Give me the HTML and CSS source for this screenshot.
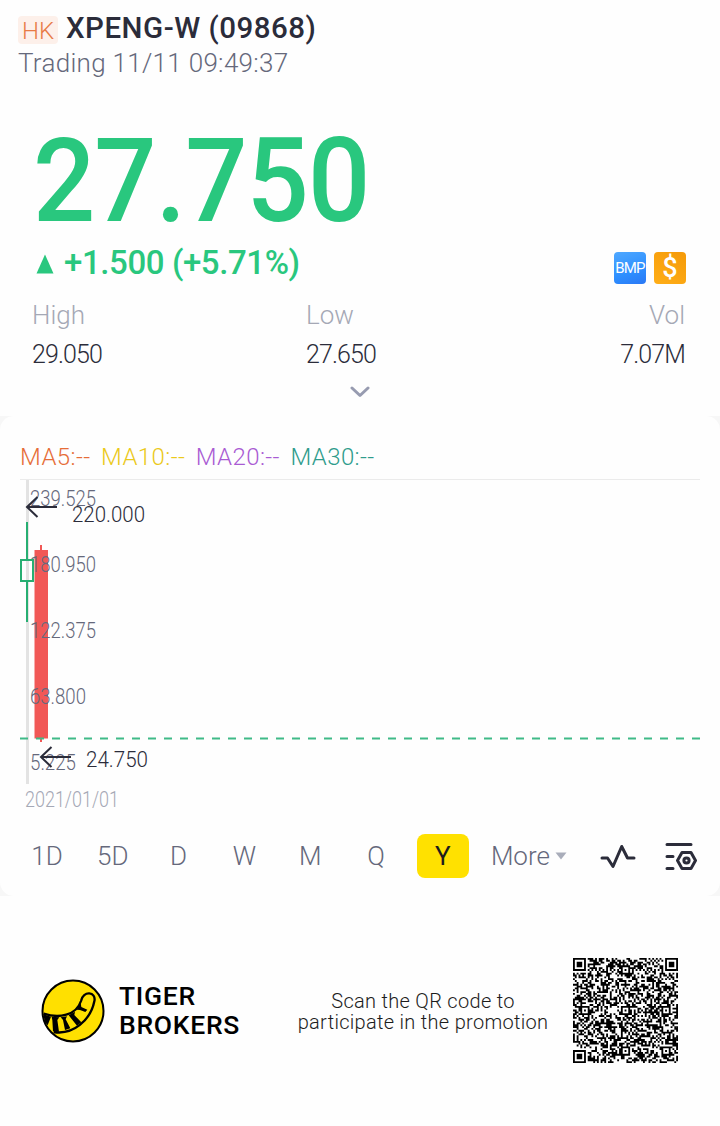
FILE: index.html
```html
<!DOCTYPE html>
<html lang="en">
<head>
    <meta charset="UTF-8">
    <meta name="viewport" content="width=device-width, initial-scale=1.0">
    <title>XPENG-W (09868)</title>
    <link rel="stylesheet" href="styles.css">
</head>
<body>
    <div class="header">
        <div class="title-row">
            <span class="market">HK</span>
            <span class="title">XPENG-W (09868)</span>
        </div>
        <div class="status">Trading 11/11 09:49:37</div>
    </div>

    <div class="quote">
        <div class="price">27.750</div>
        <div class="change-row">
            <svg class="up" width="18" height="20" viewBox="0 0 18 20"><path d="M9 0.5L17.5 19.5H0.5Z" fill="#29c77e"/></svg>
            <span class="change">+1.500 (+5.71%)</span>
            <div class="badges">
                <span class="badge bmp">BMP</span>
                <span class="badge dollar">$</span>
            </div>
        </div>
        <div class="stats">
            <div class="stat">
                <div class="label">High</div>
                <div class="value">29.050</div>
            </div>
            <div class="stat">
                <div class="label">Low</div>
                <div class="value">27.650</div>
            </div>
            <div class="stat right">
                <div class="label">Vol</div>
                <div class="value">7.07M</div>
            </div>
        </div>
        <div class="expand">
            <svg width="20" height="12" viewBox="0 0 20 12"><path d="M2 2L10 9.5L18 2" fill="none" stroke="#979bb0" stroke-width="3" stroke-linecap="round" stroke-linejoin="round"/></svg>
        </div>
    </div>

    <div class="card-wrapper">
        <div class="card">
            <div class="averages">
                <span class="ma5">MA5:--</span>
                <span class="ma10">MA10:--</span>
                <span class="ma20">MA20:--</span>
                <span class="ma30">MA30:--</span>
            </div>

            <svg class="chart" width="720" height="341" viewBox="0 479 720 341">
                <path d="M20 479.5H700" stroke="#ebebeb"/>
                <path d="M27.5 480V784" stroke="#e3e3e3" stroke-width="3"/>

                <!-- Velas -->
                <g fill="none" stroke="#27ae72" stroke-width="2">
                    <path d="M27 522V560M27 581V622"/>
                    <rect x="21" y="560" width="12" height="21"/>
                </g>
                <path d="M41 545V742" stroke="#f15856" stroke-width="2"/>
                <rect x="34.5" y="550" width="13.5" height="188.500" fill="#f15856"/>
                <path d="M20 738.500H700" stroke="#3fba87" stroke-width="2" stroke-dasharray="8 8"/>

                <g class="axis">
                    <text x="30" y="506" textLength="66" lengthAdjust="spacingAndGlyphs">239.525</text>
                    <text x="30" y="572" textLength="66" lengthAdjust="spacingAndGlyphs">180.950</text>
                    <text x="30" y="638" textLength="66" lengthAdjust="spacingAndGlyphs">122.375</text>
                    <text x="30" y="704" textLength="56" lengthAdjust="spacingAndGlyphs">63.800</text>
                    <text x="30" y="770" textLength="46" lengthAdjust="spacingAndGlyphs">5.225</text>
                </g>

                <g fill="none" stroke="#2b2c3a" stroke-width="2">
                    <path d="M57 507H27M37.500 497L27 507L37.500 517"/>
                    <path d="M71 757H41M51.500 747L41 757L51.500 767"/>
                </g>
                <g class="extreme">
                    <text x="72" y="522" textLength="73" lengthAdjust="spacingAndGlyphs">220.000</text>
                    <text x="86" y="767" textLength="62" lengthAdjust="spacingAndGlyphs">24.750</text>
                </g>
                <text class="date" x="25" y="807" textLength="94" lengthAdjust="spacingAndGlyphs">2021/01/01</text>
            </svg>

            <div class="periods">
                <span class="period">1D</span>
                <span class="period">5D</span>
                <span class="period">D</span>
                <span class="period">W</span>
                <span class="period">M</span>
                <span class="period">Q</span>
                <span class="period active">Y</span>
                <span class="more">More</span>
                <svg class="caret" width="12" height="8" viewBox="0 0 12 8"><path d="M0.500 0.500H11.500L6 7.500Z" fill="#a9adba"/></svg>
                <svg class="wave" width="36" height="26" viewBox="0 0 36 26"><path d="M2 14H7.500L13 22.500L21.700 2.500L27.500 14H34" fill="none" stroke="#2b2c3a" stroke-width="3" stroke-linecap="round" stroke-linejoin="round"/></svg>
                <svg class="settings" width="32" height="30" viewBox="0 0 32 30">
                    <g fill="none" stroke="#2b2c3a" stroke-width="3" stroke-linecap="round" stroke-linejoin="round">
                        <path d="M2 2.500H26M2 14.500H8M2 26.500H8"/>
                        <path d="M17 10.500H26L30.500 18.500L26 26.500H17L12.500 18.500Z"/>
                        <circle cx="21.500" cy="18.500" r="2.600"/>
                    </g>
                </svg>
            </div>
        </div>
    </div>

    <div class="footer">
        <svg class="logo" width="64" height="64" viewBox="62 55 192 192">
            <circle cx="158" cy="151" r="91.500" fill="#ffe000" stroke="#000" stroke-width="6"/>
            <path d="M70 159C115 174 168 165 182 121C188 88 229 93 222 122C211 178 158 224 100 214" fill="none" stroke="#000" stroke-width="7"/>
            <path d="M69 161L92 168L82 194L74 185ZM94 168L117 170L111 178L116 213L98 212L96 179ZM121 170L140 167L136 176L150 203L134 208L128 178ZM145 164L164 153L162 163L183 185L170 195L151 171ZM169 147L181 127L183 139L201 147L195 154L179 148Z"/>
        </svg>
        <div class="brand">TIGER<br>BROKERS</div>
        <div class="scan">Scan the QR code to<br>participate in the promotion</div>
        <svg class="qr" id="qr" width="105" height="105" viewBox="0 0 57 57"></svg>
    </div>

    <script src="script.js"></script>
</body>
</html>
```

FILE: styles.css
```css
body {
    font-family: Roboto, "Liberation Sans", sans-serif;
    background-color: #fefefe;
    color: #2b2c3a;
    margin: 0;
    padding: 0;
}

svg {
    display: block;
    flex-shrink: 0;
}

.header {
    padding: 9px 18px 0;
}

.title-row {
    display: flex;
    align-items: center;
    height: 37px;
}

.market {
    width: 40px;
    height: 28px;
    margin-top: 4px;
    line-height: 30px;
    border-radius: 4px;
    background-color: #fdf0ea;
    color: #e87a45;
    font-size: 24px;
    font-weight: 350;
    text-align: center;
}

.title {
    margin-left: 8px;
    font-size: 29.5px;
    font-weight: 500;
    letter-spacing: 0.5px;
    white-space: nowrap;
}

.status {
    height: 34px;
    line-height: 35px;
    font-size: 26px;
    font-weight: 350;
    letter-spacing: 0.3px;
    color: #65687b;
}

/* Cifras un poco mas estrechas */
.price {
    height: 110px;
    margin-top: 46px;
    padding-left: 33px;
    line-height: 111px;
    font-size: 116px;
    font-weight: 500;
    letter-spacing: -1px;
    color: #29c77e;
    transform: scaleX(0.945);
    transform-origin: 33px 0;
}

.change-row {
    display: flex;
    align-items: center;
    height: 52px;
    padding: 0 34px 0 36px;
}

.up {
    margin-top: 4px;
}

.change {
    margin-left: 10px;
    font-size: 33px;
    font-weight: 500;
    letter-spacing: -0.4px;
    color: #29c77e;
}

.badges {
    display: flex;
    gap: 8px;
    margin-left: auto;
    margin-top: 12px;
}

.badge {
    width: 32px;
    height: 32px;
    line-height: 32px;
    border-radius: 4px;
    color: #fff;
    text-align: center;
}

.bmp {
    font-size: 15px;
    letter-spacing: -0.8px;
    background: linear-gradient(160deg, #4fa8ff, #2e8fff 60%, #2a78f5);
}

.dollar {
    font-size: 27px;
    font-weight: 500;
    background: linear-gradient(30deg, #ffae18, #f59a08);
}

.stats {
    display: flex;
    padding: 8px 35px 0 32px;
}

.stat {
    width: 274px;
}

.stat.right {
    width: auto;
    margin-left: auto;
    text-align: right;
}

.label {
    height: 38px;
    line-height: 38px;
    font-size: 26px;
    font-weight: 350;
    color: #a5a8b5;
}

.value {
    height: 40px;
    line-height: 42px;
    font-size: 25px;
    font-weight: 350;
    letter-spacing: -0.9px;
}

.expand {
    display: flex;
    justify-content: center;
    padding: 12px 0 18px;
}

.card-wrapper {
    background-color: #f7f7f7;
}

.card {
    height: 480px;
    border-radius: 14px;
    background-color: #fefefe;
}

.averages {
    display: flex;
    gap: 10.5px;
    height: 38px;
    padding: 25px 20px 0;
    line-height: 32px;
    font-size: 24px;
    font-weight: 350;
    letter-spacing: 0.4px;
}

.ma5 { color: #e66d38; }
.ma10 { color: #ebc91b; }
.ma20 { color: #a95bd3; }
.ma30 { color: #2f9c8c; }

.axis {
    font-size: 21.5px;
    font-weight: 350;
    fill: #65687b;
}

.extreme {
    font-size: 22px;
    font-weight: 350;
    fill: #2b2c3a;
}

.date {
    font-size: 21.5px;
    font-weight: 350;
    fill: #a5a8b5;
}

.periods {
    display: flex;
    align-items: center;
    height: 44px;
    margin-top: 14px;
    padding-left: 14px;
    line-height: 44px;
    font-size: 26px;
    font-weight: 350;
    color: #65687b;
}

.period {
    width: 66px;
    margin-right: -0.2px;
    text-align: center;
}

.period.active {
    width: 52px;
    margin: 0 22px 0 8px;
    border-radius: 8px;
    background-color: #ffe100;
    color: #1c1c1c;
    font-weight: 400;
}

.more {
    width: 64px;
}

.wave {
    margin-left: 33px;
    margin-top: 2px;
}

.settings {
    margin-left: 29px;
    margin-top: 2px;
}

.footer {
    display: flex;
    align-items: center;
    padding: 62px 42px 0 41px;
    color: #000;
}

.brand {
    width: 160px;
    margin-left: 14px;
    line-height: 28.5px;
    font-size: 26.5px;
    font-weight: 500;
    letter-spacing: 0.7px;
}

.scan {
    width: 288px;
    padding-top: 2px;
    line-height: 21px;
    font-size: 20px;
    font-weight: 350;
    letter-spacing: 0.3px;
    text-align: center;
    color: #1c1c1c;
}

.qr {
    margin-left: auto;
}
```

FILE: script.js
```js
// QR de 57x57 modulos
var size = 57;
var seed = 9868;
var path = '';

function random() {
    seed = (seed * 16807) % 2147483647;
    return seed / 2147483647;
}

// Cuadro concentrico: devuelve el anillo en el que cae el modulo
function ring(x, y, cx, cy) {
    return Math.max(Math.abs(x - cx), Math.abs(y - cy));
}

function isDark(x, y) {
    var finders = [[3, 3], [53, 3], [3, 53]];
    for (var i = 0; i < finders.length; i++) {
        var r = ring(x, y, finders[i][0], finders[i][1]);
        if (r <= 4) {
            return r !== 2 && r !== 4;
        }
    }
    var marks = [[28, 6], [50, 28], [6, 28], [28, 28], [28, 50], [50, 50]];
    for (var j = 0; j < marks.length; j++) {
        var m = ring(x, y, marks[j][0], marks[j][1]);
        if (m <= 2) {
            return m !== 1;
        }
    }
    if (x === 6 || y === 6) {
        return (x + y) % 2 === 0;
    }
    return random() < 0.5;
}

for (var y = 0; y < size; y++) {
    for (var x = 0; x < size; x++) {
        if (isDark(x, y)) {
            path += 'M' + x + ' ' + y + 'h1v1h-1z';
        }
    }
}

document.getElementById('qr').innerHTML = '<path d="' + path + '"/>';
```
